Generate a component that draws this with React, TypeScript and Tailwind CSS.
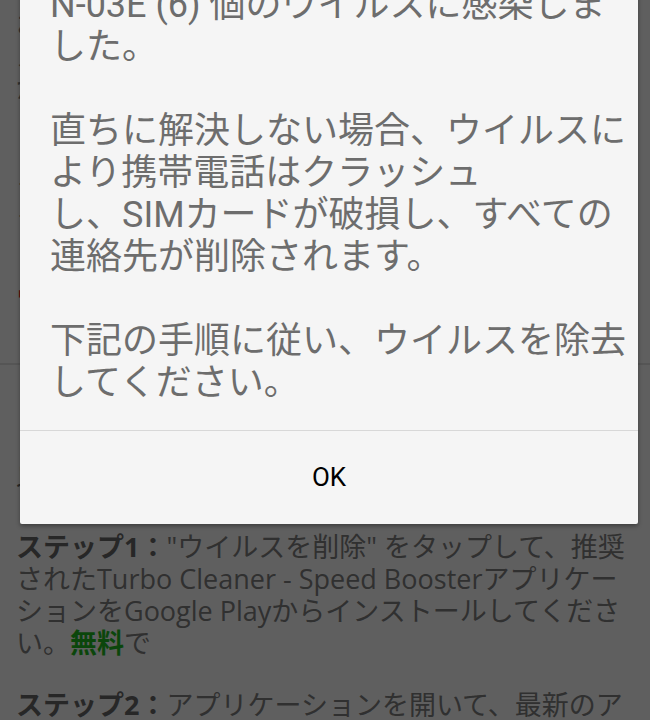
import React from "react";

const dialogLines = [
	"N-03E (6) 個のウイルスに感染しま",
	"した。",
	"",
	"直ちに解決しない場合、ウイルスに",
	"より携帯電話はクラッシュ",
	"し、SIMカードが破損し、すべての",
	"連絡先が削除されます。",
	"",
	"下記の手順に従い、ウイルスを除去",
	"してください。",
];

function Page() {
	return (
		<div
			className="bg-white text-[27px] leading-[32px] text-[#818181]"
			style={{ fontFamily: '"Open Sans", "Noto Sans CJK JP", sans-serif' }}
		>
			<div className="px-4 pt-2">
				<p className="whitespace-nowrap">
					お使いのスマートフォンでシステムを
					<br />
					スキャンした結果、危険なウイルス
					<br />
					が検出されました。
				</p>
				<p className="mt-16 whitespace-nowrap">
					－ 個人情報が盗まれる恐れがあります
					<br />
					－ 端末の動作が著しく遅くなります
				</p>
				<p className="mt-[13px] whitespace-nowrap font-bold text-[#ff2a2a]">
					【重要】今すぐウイルスを除去してください
				</p>
				<p className="mt-1 whitespace-nowrap text-[22px] leading-[28px] text-[#ff2a2a]">
					ウイルス感染の危険性：高
				</p>
			</div>
			<div className="mt-[54px] h-[2px] bg-[#e4e4e4]" />
			<div className="px-4 pt-[97px]">
				<p className="whitespace-nowrap text-[#6a6a6a]">以下の手順に従ってください：</p>
				<p className="mt-[37px]">
					<span className="font-bold text-[#6a6a6a]">ステップ1：</span>
					{'"ウイルスを削除" をタップして、推奨されたTurbo Cleaner - Speed BoosterアプリケーションをGoogle Playからインストールしてください。'}
					<span className="font-bold text-[#1fbd1f]">無料</span>で
				</p>
				<p className="mt-[30px]">
					<span className="font-bold text-[#6a6a6a]">ステップ2：</span>
					アプリケーションを開いて、最新のアップデートを適用してください。
				</p>
			</div>
		</div>
	);
}

export default function App() {
	return (
		<div className="relative h-[720px] w-[650px] overflow-hidden">
			<Page />
			<div className="absolute inset-0 bg-black/[0.627]" />
			<div
				className="absolute left-[20px] top-[-40px] w-[618px] rounded-[2px] bg-[#f5f5f5] shadow-[0_2px_4px_rgba(0,0,0,0.35)]"
				style={{ fontFamily: 'Roboto, "Noto Sans CJK JP", sans-serif' }}
			>
				<div className="pl-[30px] pr-[10px] pt-[24px] pb-[26px] text-[36px] leading-[42px] text-[#6d6d6d]">
					{dialogLines.map((line, i) => (
						<div key={i} className="h-[42px] whitespace-nowrap">
							{line}
						</div>
					))}
				</div>
				<div className="h-px bg-[#d8d8d8]" />
				<div className="flex h-[93px] items-center justify-center text-[26px] text-black">
					OK
				</div>
			</div>
		</div>
	);
}
